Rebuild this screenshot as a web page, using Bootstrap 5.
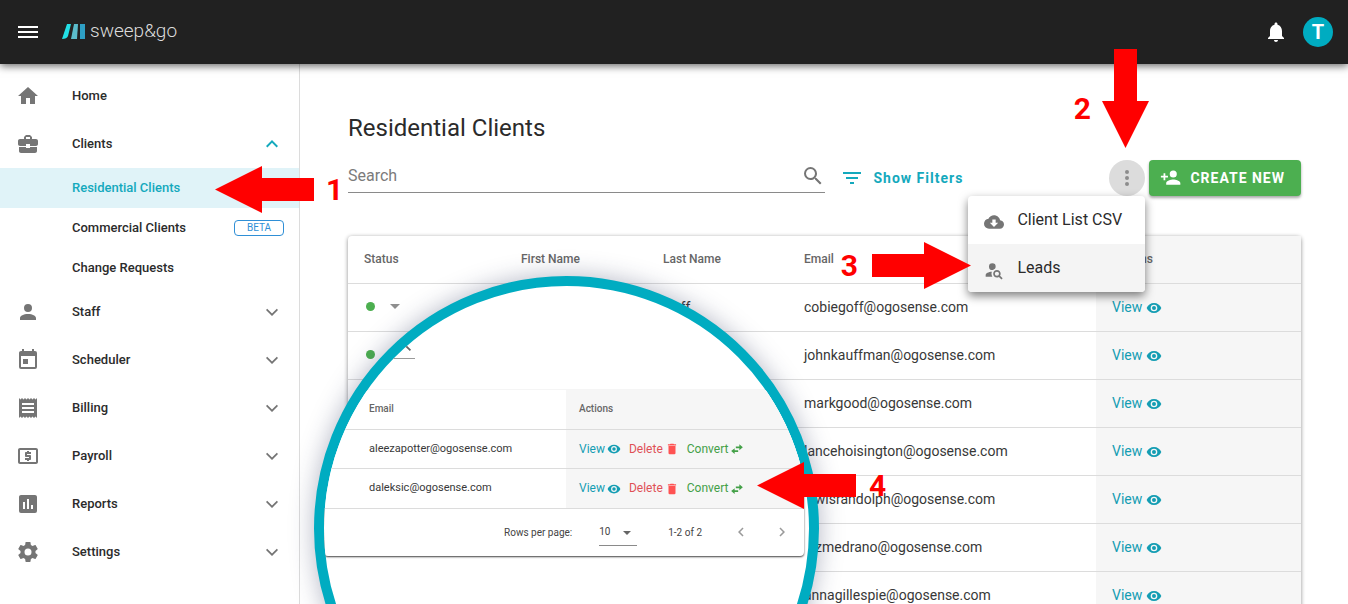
<!DOCTYPE html>
<html lang="en">
<head>
<meta charset="utf-8">
<meta name="viewport" content="width=device-width, initial-scale=1">
<title>Residential Clients</title>
<link href="https://cdn.jsdelivr.net/npm/bootstrap@5.3.0/dist/css/bootstrap.min.css" rel="stylesheet">
<style>
  :root { --teal: #00acc1; --ink: #2b2b2b; --muted: #757575; --line: #dcdcdc; --shade: #f6f6f6; }
  body { font-family: Roboto, "Liberation Sans", sans-serif; font-size: 14px; color: var(--ink); }
  svg { fill: currentColor; flex: none; }
  a { text-decoration: none; }
  .ico { width: 24px; height: 24px; }
  .ico-sm { width: 16px; height: 16px; }
  .ico-xs { width: 14px; height: 14px; }

  .topbar { height: 64px; background: #212121; box-shadow: 0 2px 8px rgba(0,0,0,.6); z-index: 5; padding: 0 15px 0 16px; }
  .brand { font-size: 19px; font-weight: 300; line-height: 24px; color: #dcdcdc; gap: 4px; margin-left: 22px; }
  .brand svg { width: 24px; height: 16px; }
  .brand span { padding-bottom: 2px; }
  .avatar { width: 30px; height: 30px; background: var(--teal); font-size: 20px; font-weight: 700; line-height: 30px; margin-left: 15px; }

  .sidebar { width: 300px; border-right: 1px solid #dcdcdc; padding-top: 8px; font-size: 13px; font-weight: 500; }
  .sidebar a { color: var(--ink); height: 48px; padding: 0 15px 0 16px; }
  .sidebar .ico { color: var(--muted); }
  .sidebar .ico.open-mark { color: #14a9bd; }
  .sidebar .name-text { margin-left: 32px; padding-bottom: 1px; }
  .sidebar a.sub-link { height: 40px; padding-left: 72px; }
  .sidebar a.sub-link .name-text { margin-left: 0; }
  .sidebar a.current { background: #e0f3f8; color: #14a9bd; }
  .beta { width: 50px; height: 16px; border: 1px solid #2f8fd6; border-radius: 4px; color: #2f8fd6; font-size: 10px; line-height: 14px; font-weight: 400; }

  .content-area { padding: 48px 47px 0 48px; }
  h1 { font-size: 24px; font-weight: 400; line-height: 32px; margin: 0 0 16px; }
  .search-box { border-bottom: 1px solid #8a8a8a; height: 33px; }
  .search-box input { font-size: 16px; color: var(--ink); background: none; outline: 0; }
  .search-box input::placeholder { color: #7b7b7b; opacity: 1; }
  .search-box .ico { color: var(--muted); }
  .btn { font-size: 14px; font-weight: 700; letter-spacing: 1px; height: 36px; }
  .btn-filter { color: #14a9bd; gap: 10px; margin-left: 15px; }
  .btn-create, .btn-create:hover { background: #4caf50; color: #fff; border-radius: 4px; box-shadow: 0 2px 3px rgba(0,0,0,.35); gap: 7px; padding: 0 16px 0 11px; }
  .btn-create svg { width: 23px; height: 23px; }
  .btn-dots { width: 36px; background: #dcdcdc; color: #8c8c8c; }
  .menu-pop { right: 0; top: 36px; width: 177px; background: #fff; border-radius: 4px; box-shadow: 0 4px 10px rgba(0,0,0,.5); z-index: 3; font-size: 16px; }
  .menu-pop a { height: 48px; padding: 0 16px; gap: 13px; color: var(--ink); }
  .menu-pop svg { width: 20px; height: 20px; color: var(--muted); margin-top: 3px; }
  .menu-pop a.hovered { background: #f4f4f4; }

  .sheet { margin-top: 40px; border-radius: 4px; box-shadow: 0 1px 4px rgba(0,0,0,.45); background: #fff; }
  .sheet table { table-layout: fixed; color: #383838; }
  .sheet th, .sheet td { height: 48px; padding: 0 16px; border-bottom: 1px solid var(--line); vertical-align: middle; white-space: nowrap; line-height: 20px; }
  .sheet th { height: 47px; font-size: 12px; font-weight: 500; color: #666; }
  .sheet td { padding-bottom: 1px; }
  .sheet td:last-child, .sheet th:last-child { background: var(--shade); }
  .sheet a { color: #149db3; }
  .col-status { width: 157px; }
  .col-first { width: 142px; }
  .col-last { width: 141px; }
  .col-actions { width: 205px; }
  .dot { width: 9px; height: 9px; background: #4caf50; border-radius: 50%; margin-left: 2px; }
  .caret { border: 5px solid transparent; border-bottom: 0; border-top-color: #8f8f8f; margin-left: 15px; }

  .lens { left: 14px; top: 212px; width: 505px; height: 505px; border: 10px solid var(--teal); border-radius: 50%; background: #fff; box-shadow: 0 0 24px rgba(40,50,90,.35); z-index: 2; }
  .lens-search { width: 91px; height: 73px; border-bottom: 1px solid #9a9a9a; margin-bottom: 31px; padding-right: 1px; padding-bottom: 4px; color: #666; }
  .lens .sheet { margin: 0 5px 0 0; border-radius: 4px; box-shadow: 0 1px 2px rgba(0,0,0,.75); }
  .lens .sheet th { height: 39px; font-size: 10px; padding: 0 13px; }
  .lens .sheet td { height: 39px; font-size: 11px; padding: 0 13px; }
  .lens .sheet td:last-child { font-size: 12px; }
  .lens .sheet tr:last-child td { height: 40px; }
  .lens .sheet th:first-child, .lens .sheet td:first-child { padding-left: 45px; }
  .lens .col-actions { width: 238px; }
  .lens td .group { gap: 8px; }
  .lens td a { display: flex; align-items: center; gap: 2px; }
  .lens td svg { margin-top: 1px; }
  .lens .sheet a.del { color: #e05056; }
  .lens .sheet a.conv { color: #43a047; }
  .del svg { color: #ff5252; }
  .pager { height: 47px; font-size: 10px; padding-right: 13px; color: #444; }
  .pager .size-box { margin: 0 31px 0 27px; }
  .pager select { border: 0; border-bottom: 1px solid #8a8a8a; border-radius: 0; width: 38px; height: 27px; font-size: 10px; color: #444; background: none; appearance: none; padding: 0; }
  .pager .caret { border-top-color: #666; border-width: 4px; border-bottom: 0; right: 6px; top: 12px; }
  .pager button { color: #9a9a9a; }
  .pager .prev { margin: 0 23px 0 30px; }
  .pager button svg { width: 18px; height: 18px; }

  .callout { z-index: 6; color: #f00; font-size: 30px; font-weight: 700; line-height: 47px; }
  .callout-1 { left: 215px; top: 166px; gap: 12px; }
  .callout-2 { right: 199px; top: 49px; gap: 11px; }
  .callout-2 span { padding-top: 36px; }
  .callout-3 { right: 377px; top: 242px; gap: 14px; }
  .callout-4 { left: 757px; top: 462px; gap: 13px; }
</style>
</head>
<body>
<svg class="d-none" aria-hidden="true">
  <symbol id="home" viewBox="0 0 24 24"><path d="M10,20V14H14V20H19V12H22L12,3L2,12H5V20H10Z"/></symbol>
  <symbol id="case" viewBox="0 0 24 24"><path d="M10 16v-1H3.010L3 19c0 1.110.89 2 2 2h14c1.110 0 2-.89 2-2v-4h-7v1h-4zm10-9h-4.010V5l-2-2h-4l-2 2v2H4c-1.100 0-2 .9-2 2v3c0 1.110.89 2 2 2h6v-2h4v2h6c1.100 0 2-.9 2-2V9c0-1.100-.9-2-2-2zm-6 0h-4V5h4v2z"/></symbol>
  <symbol id="person" viewBox="0 0 24 24"><path d="M12,4A4,4 0 0,1 16,8A4,4 0 0,1 12,12A4,4 0 0,1 8,8A4,4 0 0,1 12,4M12,14C16.42,14 20,15.79 20,18V20H4V18C4,15.79 7.58,14 12,14Z"/></symbol>
  <symbol id="calendar" viewBox="0 0 24 24"><path d="M7,11H12V16H7M19,19H5V8H19M19,3H18V1H16V3H8V1H6V3H5C3.89,3 3,3.9 3,5V19A2,2 0 0,0 5,21H19A2,2 0 0,0 21,19V5A2,2 0 0,0 19,3Z"/></symbol>
  <symbol id="receipt" viewBox="0 0 24 24"><path d="M18 17H6v-2h12v2zm0-4H6v-2h12v2zm0-4H6V7h12v2zM3 22l1.5-1.5L6 22l1.5-1.5L9 22l1.5-1.5L12 22l1.5-1.5L15 22l1.5-1.5L18 22l1.5-1.5L21 22V2l-1.5 1.5L18 2l-1.5 1.5L15 2l-1.5 1.5L12 2l-1.5 1.5L9 2 7.5 3.5 6 2 4.5 3.5 3 2v20z"/></symbol>
  <symbol id="cash" viewBox="0 0 24 24"><path d="M11 17h2v-1h1c.55 0 1-.45 1-1v-3c0-.55-.45-1-1-1h-3v-1h4V8h-2V7h-2v1h-1c-.55 0-1 .45-1 1v3c0 .55.45 1 1 1h3v1H9v2h2v1zm9-13H4c-1.11 0-1.99.89-1.99 2L2 18c0 1.11.89 2 2 2h16c1.11 0 2-.89 2-2V6c0-1.11-.89-2-2-2zm0 14H4V6h16v12z"/></symbol>
  <symbol id="chart" viewBox="0 0 24 24"><path d="M9 17H7V10H9M13 17H11V7H13M17 17H15V13H17M19 3H5C3.9 3 3 3.9 3 5V19A2 2 0 0 0 5 21H19A2 2 0 0 0 21 19V5C21 3.9 20.1 3 19 3Z"/></symbol>
  <symbol id="cog" viewBox="0 0 24 24"><path d="M12,15.5A3.5,3.5 0 0,1 8.5,12A3.5,3.5 0 0,1 12,8.5A3.5,3.5 0 0,1 15.5,12A3.5,3.5 0 0,1 12,15.5M19.43,12.97C19.47,12.65 19.5,12.33 19.5,12C19.5,11.67 19.47,11.34 19.43,11L21.54,9.37C21.73,9.22 21.78,8.95 21.66,8.73L19.66,5.27C19.54,5.05 19.27,4.96 19.05,5.05L16.56,6.05C16.04,5.66 15.5,5.32 14.87,5.07L14.5,2.42C14.46,2.18 14.25,2 14,2H10C9.75,2 9.54,2.18 9.5,2.42L9.13,5.07C8.5,5.32 7.96,5.66 7.44,6.05L4.95,5.05C4.73,4.96 4.46,5.05 4.34,5.27L2.34,8.73C2.21,8.95 2.27,9.22 2.46,9.37L4.57,11C4.53,11.34 4.5,11.67 4.5,12C4.5,12.33 4.53,12.65 4.57,12.97L2.46,14.63C2.27,14.78 2.21,15.05 2.34,15.27L4.34,18.73C4.46,18.95 4.73,19.03 4.95,18.95L7.44,17.94C7.96,18.34 8.5,18.68 9.13,18.93L9.5,21.58C9.54,21.82 9.75,22 10,22H14C14.25,22 14.46,21.82 14.5,21.58L14.87,18.93C15.5,18.67 16.04,18.34 16.56,17.94L19.05,18.95C19.27,19.03 19.54,18.95 19.66,18.73L21.66,15.27C21.78,15.05 21.73,14.78 21.54,14.63L19.43,12.97Z"/></symbol>
  <symbol id="down" viewBox="0 0 24 24"><path d="M7.2,8.8L12,13.6L16.8,8.8L18,10L12,16L6,10Z"/></symbol>
  <symbol id="up" viewBox="0 0 24 24"><path d="M7.41,15.41L12,10.83L16.59,15.41L18,14L12,8L6,14L7.41,15.41Z"/></symbol>
  <symbol id="left" viewBox="0 0 24 24"><path d="M15.41,16.58L10.83,12L15.41,7.41L14,6L8,12L14,18L15.41,16.58Z"/></symbol>
  <symbol id="right" viewBox="0 0 24 24"><path d="M8.59,16.58L13.17,12L8.59,7.41L10,6L16,12L10,18L8.59,16.58Z"/></symbol>
  <symbol id="bell" viewBox="0 0 24 24"><path d="M12 22c1.1 0 2-.9 2-2h-4c0 1.1.89 2 2 2zm6-6v-5c0-3.07-1.64-5.64-4.5-6.32V4c0-.83-.67-1.5-1.5-1.5s-1.5.67-1.5 1.5v.68C7.63 5.36 6 7.92 6 11v5l-2 2v1h16v-1l-2-2z"/></symbol>
  <symbol id="magnify" viewBox="0 0 24 24"><path d="M9.5,3A6.5,6.5 0 0,1 16,9.5C16,11.11 15.41,12.59 14.44,13.73L14.71,14H15.5L20.5,19L19,20.5L14,15.5V14.71L13.73,14.44C12.59,15.41 11.11,16 9.5,16A6.5,6.5 0 0,1 3,9.5A6.5,6.5 0 0,1 9.5,3M9.5,5C7,5 5,7 5,9.5C5,12 7,14 9.5,14C12,14 14,12 14,9.5C14,7 12,5 9.5,5Z"/></symbol>
  <symbol id="filter" viewBox="0 0 24 24"><path d="M6,13H18V11H6M3,6V8H21V6M10,18H14V16H10V18Z"/></symbol>
  <symbol id="dots" viewBox="0 0 24 24"><path d="M12,16A2,2 0 0,1 14,18A2,2 0 0,1 12,20A2,2 0 0,1 10,18A2,2 0 0,1 12,16M12,10A2,2 0 0,1 14,12A2,2 0 0,1 12,14A2,2 0 0,1 10,12A2,2 0 0,1 12,10M12,4A2,2 0 0,1 14,6A2,2 0 0,1 12,8A2,2 0 0,1 10,6A2,2 0 0,1 12,4Z"/></symbol>
  <symbol id="add-person" viewBox="0 0 24 24"><path d="M15,14C12.33,14 7,15.33 7,18V20H23V18C23,15.33 17.67,14 15,14M6,10V7H4V10H1V12H4V15H6V12H9V10M15,12A4,4 0 0,0 19,8A4,4 0 0,0 15,4A4,4 0 0,0 11,8A4,4 0 0,0 15,12Z"/></symbol>
  <symbol id="cloud" viewBox="0 0 24 24"><path d="M17,13L12,18L7,13H10V9H14V13M19.35,10.03C18.67,6.59 15.64,4 12,4C9.11,4 6.6,5.64 5.35,8.03C2.34,8.36 0,10.9 0,14A6,6 0 0,0 6,20H19A5,5 0 0,0 24,15C24,12.36 21.95,10.22 19.35,10.03Z"/></symbol>
  <symbol id="find-person" viewBox="0 0 24 24"><path d="M15.5,12C18,12 20,14 20,16.5C20,17.38 19.75,18.21 19.31,18.9L22.39,22L21,23.39L17.88,20.32C17.19,20.75 16.37,21 15.5,21C13,21 11,19 11,16.5C11,14 13,12 15.5,12M15.5,14A2.5,2.5 0 0,0 13,16.5A2.5,2.5 0 0,0 15.5,19A2.5,2.5 0 0,0 18,16.5A2.5,2.5 0 0,0 15.5,14M10,4A4,4 0 0,1 14,8C14,8.91 13.69,9.75 13.18,10.43C12.32,10.75 11.55,11.26 10.91,11.9L10,12A4,4 0 0,1 6,8A4,4 0 0,1 10,4M2,20V18C2,15.88 5.31,14.14 9.5,14C9.18,14.78 9,15.62 9,16.5C9,17.79 9.38,19 10,20H2Z"/></symbol>
  <symbol id="eye" viewBox="0 0 24 24"><path d="M12,9A3,3 0 0,0 9,12A3,3 0 0,0 12,15A3,3 0 0,0 15,12A3,3 0 0,0 12,9M12,17A5,5 0 0,1 7,12A5,5 0 0,1 12,7A5,5 0 0,1 17,12A5,5 0 0,1 12,17M12,4.5C7,4.5 2.73,7.61 1,12C2.73,16.39 7,19.5 12,19.5C17,19.5 21.27,16.39 23,12C21.27,7.61 17,4.5 12,4.5Z"/></symbol>
  <symbol id="trash" viewBox="0 0 24 24"><path d="M19,4H15.5L14.500,3H9.500L8.500,4H5V6H19M6,19A2,2 0 0,0 8,21H16A2,2 0 0,0 18,19V7H6V19Z"/></symbol>
  <symbol id="swap" viewBox="0 0 24 24"><path d="M22,9L16,4V7.500H10V10.500H16V14M8,10.500L2,15.500L8,20.500V17H14V14H8V10.500Z"/></symbol>
  <symbol id="arrow-left" viewBox="0 0 99 47"><path d="M0 23.500L47 0V12H99V35H47V47Z"/></symbol>
  <symbol id="arrow-right" viewBox="0 0 99 47"><path d="M99 23.500L52 0V12H0V35H52V47Z"/></symbol>
  <symbol id="arrow-down" viewBox="0 0 47 99"><path d="M23.500 99L0 52H12V0H35V52H47Z"/></symbol>
</svg>

<div class="vh-100 overflow-hidden position-relative d-flex flex-column">
  <header class="topbar d-flex flex-shrink-0 align-items-center position-relative">
    <button type="button" class="border-0 bg-transparent text-white p-0 d-flex" aria-label="Menu">
      <svg class="ico" viewBox="0 0 24 24"><path d="M2 6H22V8H2ZM2 11H22V13H2ZM2 16H22V18H2Z"/></svg>
    </button>
    <a href="#" class="brand d-flex align-items-center">
      <svg viewBox="0 0 24 16"><path fill="#22e0e6" d="M5 0H9L6 12Q5 15 0 15Z"/><path fill="#5bbccb" d="M12 0H16L15 15H9Z"/><path fill="#2e9fc4" d="M18 0H23V15H18Z"/></svg>
      <span>sweep&amp;go</span>
    </a>
    <button type="button" class="ms-auto border-0 bg-transparent text-white p-0 d-flex" aria-label="Notifications"><svg class="ico"><use href="#bell"/></svg></button>
    <button type="button" class="avatar border-0 rounded-circle text-white text-center p-0">T</button>
  </header>

  <div class="d-flex flex-grow-1">
    <nav class="sidebar flex-shrink-0">
      <a href="#" class="d-flex align-items-center"><svg class="ico"><use href="#home"/></svg><span class="name-text">Home</span></a>
      <a href="#" class="d-flex align-items-center"><svg class="ico"><use href="#case"/></svg><span class="name-text me-auto">Clients</span><svg class="ico open-mark"><use href="#up"/></svg></a>
      <a href="#" class="sub-link current d-flex align-items-center"><span class="name-text">Residential Clients</span></a>
      <a href="#" class="sub-link d-flex align-items-center"><span class="name-text me-auto">Commercial Clients</span><span class="beta text-center">BETA</span></a>
      <a href="#" class="sub-link d-flex align-items-center"><span class="name-text">Change Requests</span></a>
      <a href="#" class="d-flex align-items-center"><svg class="ico"><use href="#person"/></svg><span class="name-text me-auto">Staff</span><svg class="ico"><use href="#down"/></svg></a>
      <a href="#" class="d-flex align-items-center"><svg class="ico"><use href="#calendar"/></svg><span class="name-text me-auto">Scheduler</span><svg class="ico"><use href="#down"/></svg></a>
      <a href="#" class="d-flex align-items-center"><svg class="ico"><use href="#receipt"/></svg><span class="name-text me-auto">Billing</span><svg class="ico"><use href="#down"/></svg></a>
      <a href="#" class="d-flex align-items-center"><svg class="ico"><use href="#cash"/></svg><span class="name-text me-auto">Payroll</span><svg class="ico"><use href="#down"/></svg></a>
      <a href="#" class="d-flex align-items-center"><svg class="ico"><use href="#chart"/></svg><span class="name-text me-auto">Reports</span><svg class="ico"><use href="#down"/></svg></a>
      <a href="#" class="d-flex align-items-center"><svg class="ico"><use href="#cog"/></svg><span class="name-text me-auto">Settings</span><svg class="ico"><use href="#down"/></svg></a>
    </nav>

    <main class="content-area flex-grow-1 position-relative">
      <h1>Residential Clients</h1>
      <div class="d-flex">
        <div class="search-box w-50 d-flex align-items-center flex-shrink-0">
          <input type="text" class="border-0 p-0 flex-grow-1" placeholder="Search" aria-label="Search">
          <svg class="ico"><use href="#magnify"/></svg>
        </div>
        <button type="button" class="btn btn-filter border-0 p-0 d-flex align-items-center"><svg class="ico"><use href="#filter"/></svg>Show Filters</button>
        <div class="position-relative ms-auto me-1">
          <button type="button" class="btn btn-dots rounded-circle border-0 p-0 d-flex align-items-center justify-content-center" aria-label="More"><svg class="ico"><use href="#dots"/></svg></button>
          <div class="menu-pop position-absolute overflow-hidden">
            <a href="#" class="d-flex align-items-center"><svg><use href="#cloud"/></svg>Client List CSV</a>
            <a href="#" class="hovered d-flex align-items-center"><svg><use href="#find-person"/></svg>Leads</a>
          </div>
        </div>
        <button type="button" class="btn btn-create border-0 d-flex align-items-center"><svg viewBox="0 0 26 26"><use href="#add-person" width="24" height="24"/></svg>CREATE NEW</button>
      </div>

      <div class="sheet">
        <table class="w-100">
          <colgroup><col class="col-status"><col class="col-first"><col class="col-last"><col><col class="col-actions"></colgroup>
          <thead><tr><th>Status</th><th>First Name</th><th>Last Name</th><th>Email</th><th>Actions</th></tr></thead>
          <tbody>
            <tr><td><div class="d-flex align-items-center"><span class="dot"></span><span class="caret"></span></div></td><td></td><td>Goff</td><td>cobiegoff@ogosense.com</td><td><a href="#">View <svg class="ico-sm"><use href="#eye"/></svg></a></td></tr>
            <tr><td><div class="d-flex align-items-center"><span class="dot"></span></div></td><td></td><td></td><td>johnkauffman@ogosense.com</td><td><a href="#">View <svg class="ico-sm"><use href="#eye"/></svg></a></td></tr>
            <tr><td></td><td></td><td></td><td>markgood@ogosense.com</td><td><a href="#">View <svg class="ico-sm"><use href="#eye"/></svg></a></td></tr>
            <tr><td></td><td></td><td></td><td>lancehoisington@ogosense.com</td><td><a href="#">View <svg class="ico-sm"><use href="#eye"/></svg></a></td></tr>
            <tr><td></td><td></td><td></td><td>lewisrandolph@ogosense.com</td><td><a href="#">View <svg class="ico-sm"><use href="#eye"/></svg></a></td></tr>
            <tr><td></td><td></td><td></td><td>luzmedrano@ogosense.com</td><td><a href="#">View <svg class="ico-sm"><use href="#eye"/></svg></a></td></tr>
            <tr><td></td><td></td><td></td><td>annagillespie@ogosense.com</td><td><a href="#">View <svg class="ico-sm"><use href="#eye"/></svg></a></td></tr>
          </tbody>
        </table>
      </div>

      <div class="lens position-absolute overflow-hidden">
        <div class="lens-search d-flex align-items-end justify-content-end"><svg width="20" height="20"><use href="#magnify"/></svg></div>
        <div class="sheet">
          <table class="w-100">
            <colgroup><col><col class="col-actions"></colgroup>
            <thead><tr><th>Email</th><th>Actions</th></tr></thead>
            <tbody>
              <tr><td>aleezapotter@ogosense.com</td><td><div class="group d-flex"><a href="#">View <svg class="ico-xs"><use href="#eye"/></svg></a><a href="#" class="del">Delete <svg class="ico-xs"><use href="#trash"/></svg></a><a href="#" class="conv">Convert <svg class="ico-xs"><use href="#swap"/></svg></a></div></td></tr>
              <tr><td>daleksic@ogosense.com</td><td><div class="group d-flex"><a href="#">View <svg class="ico-xs"><use href="#eye"/></svg></a><a href="#" class="del">Delete <svg class="ico-xs"><use href="#trash"/></svg></a><a href="#" class="conv">Convert <svg class="ico-xs"><use href="#swap"/></svg></a></div></td></tr>
            </tbody>
          </table>
          <div class="pager d-flex align-items-center justify-content-end">
            <label for="rows">Rows per page:</label>
            <div class="size-box position-relative"><select id="rows"><option>10</option></select><span class="caret position-absolute"></span></div>
            <span>1-2 of 2</span>
            <button type="button" class="prev border-0 bg-transparent p-0 d-flex" aria-label="Previous page"><svg><use href="#left"/></svg></button>
            <button type="button" class="border-0 bg-transparent p-0 d-flex" aria-label="Next page"><svg><use href="#right"/></svg></button>
          </div>
        </div>
      </div>
    </main>
  </div>

  <div class="callout callout-1 position-absolute d-flex"><svg width="99" height="47"><use href="#arrow-left"/></svg><span>1</span></div>
  <div class="callout callout-2 position-absolute d-flex"><span>2</span><svg width="47" height="99"><use href="#arrow-down"/></svg></div>
  <div class="callout callout-3 position-absolute d-flex"><span>3</span><svg width="99" height="47"><use href="#arrow-right"/></svg></div>
  <div class="callout callout-4 position-absolute d-flex"><svg width="99" height="47"><use href="#arrow-left"/></svg><span>4</span></div>
</div>
<script src="https://cdn.jsdelivr.net/npm/bootstrap@5.3.0/dist/js/bootstrap.bundle.min.js"></script>
</body>
</html>
